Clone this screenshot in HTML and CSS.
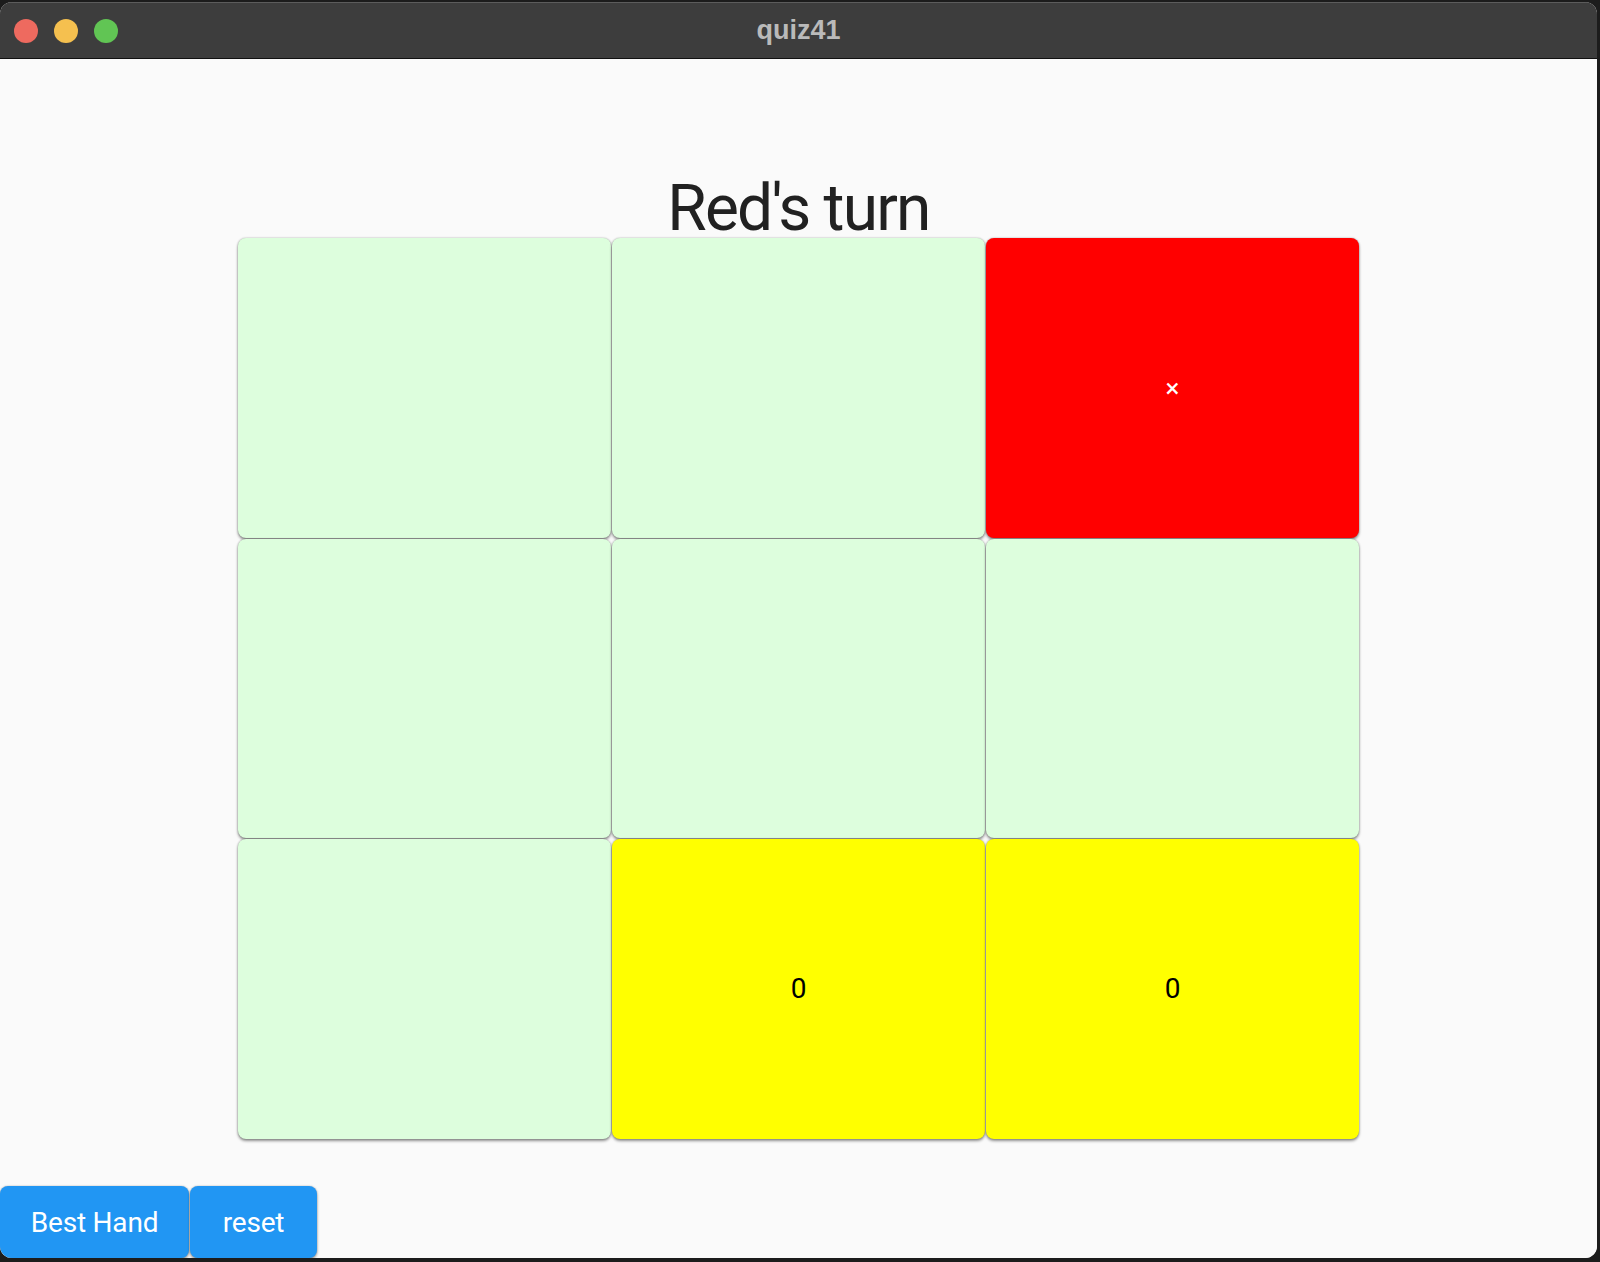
FILE: index.html
```html
<!DOCTYPE html>
<html lang="en">
<head>
<meta charset="utf-8">
<title>quiz41</title>
<link rel="stylesheet" href="styles.css">
</head>
<body>
<div class="window">
  <header class="titlebar">
    <div class="lights">
      <span class="light red"></span>
      <span class="light yellow"></span>
      <span class="light green"></span>
    </div>
    <div class="title">quiz41</div>
    <div></div>
  </header>
  <main class="content">
    <h1 class="turn">Red's turn</h1>
    <div class="board">
      <div class="cell"></div>
      <div class="cell"></div>
      <div class="cell cell-red">×</div>
      <div class="cell"></div>
      <div class="cell"></div>
      <div class="cell"></div>
      <div class="cell"></div>
      <div class="cell cell-yellow">0</div>
      <div class="cell cell-yellow">0</div>
    </div>
    <div class="footer">
      <button class="btn btn-best">Best Hand</button>
      <button class="btn btn-reset">reset</button>
    </div>
  </main>
</div>
</body>
</html>
```

FILE: styles.css
```css
html, body {
  margin: 0;
  padding: 0;
}
body {
  width: 1600px;
  height: 1262px;
  background: #1c1c1c;
  overflow: hidden;
}
.window {
  margin: 2px 3px 0 0;
  height: 1256px;
  border-radius: 12px;
  overflow: hidden;
  display: flex;
  flex-direction: column;
  background: #fafafa;
}
.titlebar {
  flex: none;
  background: #3d3d3d;
  border-top: 1px solid #5c5c5c;
  border-bottom: 1px solid #111;
  box-sizing: border-box;
  height: 57px;
  display: grid;
  grid-template-columns: 1fr auto 1fr;
  align-items: center;
}
.lights {
  display: flex;
  gap: 16px;
  padding-left: 14px;
}
.light {
  width: 24px;
  height: 24px;
  border-radius: 50%;
}
.red { background: #ee6a5f; }
.yellow { background: #f5c04f; }
.green { background: #61c554; }
.title {
  font-family: "Liberation Sans", Arial, sans-serif;
  font-weight: bold;
  font-size: 27px;
  color: #bababa;
  padding-bottom: 1px;
}
.content {
  flex: 1;
  display: flex;
  flex-direction: column;
  background: #fafafa;
}
.turn {
  margin: 121px 0 0 0;
  height: 58px;
  line-height: 58px;
  font-family: Roboto, sans-serif;
  font-weight: 400;
  font-size: 64px;
  letter-spacing: -1.8px;
  color: #212121;
  text-align: center;
}
.board {
  width: 1121px;
  margin: 0 auto;
  display: grid;
  grid-template-columns: repeat(3, 1fr);
  grid-template-rows: repeat(3, 299.5px);
  gap: 1px 1px;
}
.cell {
  background: #ddfedd;
  border-radius: 8px;
  box-shadow: 0 2px 3px rgba(0,0,0,0.42), 0 0 2px rgba(0,0,0,0.3);
  display: flex;
  align-items: center;
  justify-content: center;
  font-family: Roboto, sans-serif;
  font-size: 28px;
  color: #000;
}
.cell-red {
  background: #ff0000;
  color: #fff;
  font-size: 26px;
}
.cell-yellow {
  background: #ffff00;
}
.footer {
  margin-top: auto;
  display: flex;
  gap: 1px;
  height: 72px;
}
.btn {
  height: 72px;
  padding: 0;
  border: none;
  border-radius: 8px;
  background: #2196f3;
  color: #fff;
  font-family: Roboto, sans-serif;
  font-size: 28px;
  letter-spacing: -0.2px;
  text-align: center;
  box-shadow: 0 2px 3px rgba(0,0,0,0.35), 0 0 2px rgba(0,0,0,0.25);
}
.btn-best { width: 189px; }
.btn-reset { width: 127px; }
```
